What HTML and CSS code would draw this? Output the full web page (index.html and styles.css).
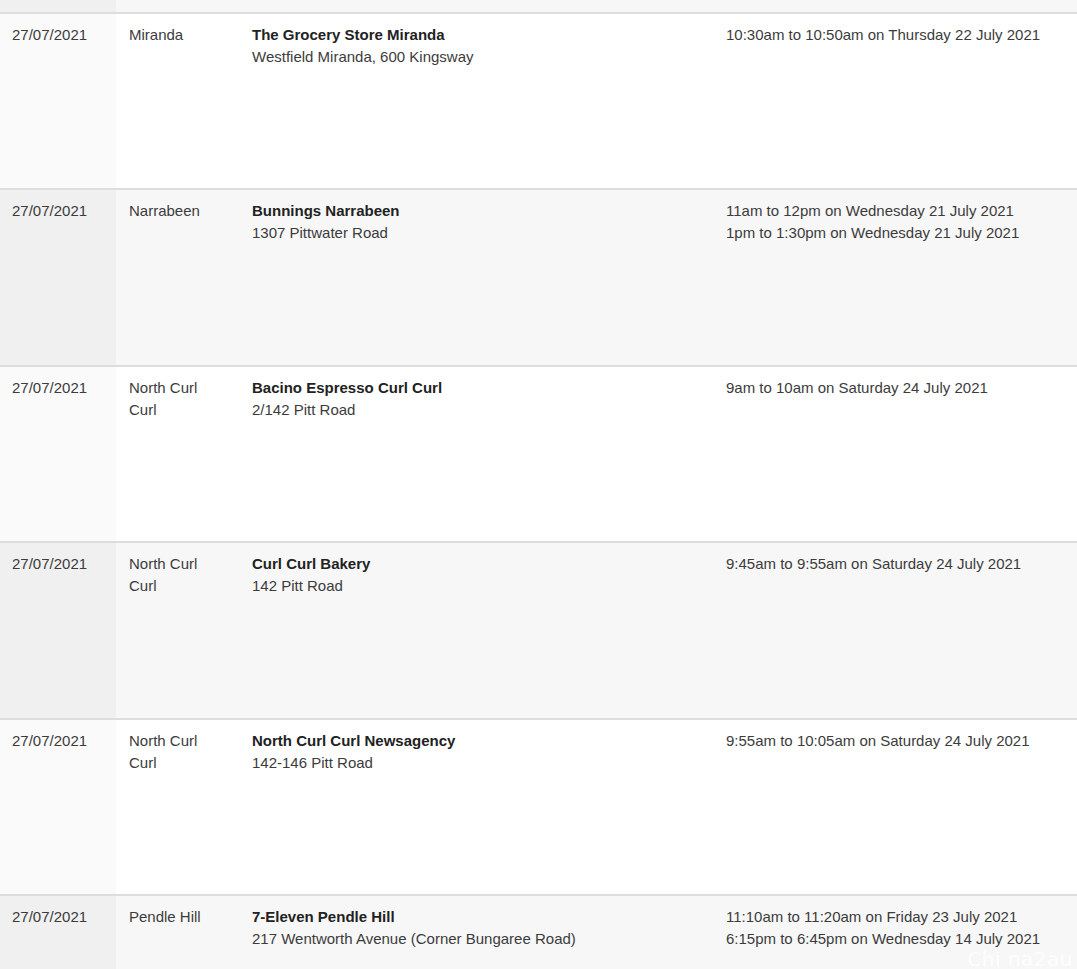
FILE: index.html
```html
<!DOCTYPE html>
<html lang="en">
<head>
<meta charset="utf-8">
<title>Case locations</title>
<link rel="stylesheet" href="styles.css">
</head>
<body>
<div class="table">
  <div class="row even stub">
    <div class="cell c1"></div><div class="cell c2"></div><div class="cell c3"></div><div class="cell c4"></div>
  </div>
  <div class="row odd">
    <div class="cell c1">27/07/2021</div>
    <div class="cell c2">Miranda</div>
    <div class="cell c3"><strong>The Grocery Store Miranda</strong><br>Westfield Miranda, 600 Kingsway</div>
    <div class="cell c4">10:30am to 10:50am on Thursday 22 July 2021</div>
  </div>
  <div class="row even">
    <div class="cell c1">27/07/2021</div>
    <div class="cell c2">Narrabeen</div>
    <div class="cell c3"><strong>Bunnings Narrabeen</strong><br>1307 Pittwater Road</div>
    <div class="cell c4">11am to 12pm on Wednesday 21 July 2021<br>1pm to 1:30pm on Wednesday 21 July 2021</div>
  </div>
  <div class="row odd">
    <div class="cell c1">27/07/2021</div>
    <div class="cell c2">North Curl Curl</div>
    <div class="cell c3"><strong>Bacino Espresso Curl Curl</strong><br>2/142 Pitt Road</div>
    <div class="cell c4">9am to 10am on Saturday 24 July 2021</div>
  </div>
  <div class="row even">
    <div class="cell c1">27/07/2021</div>
    <div class="cell c2">North Curl Curl</div>
    <div class="cell c3"><strong>Curl Curl Bakery</strong><br>142 Pitt Road</div>
    <div class="cell c4">9:45am to 9:55am on Saturday 24 July 2021</div>
  </div>
  <div class="row odd">
    <div class="cell c1">27/07/2021</div>
    <div class="cell c2">North Curl Curl</div>
    <div class="cell c3"><strong>North Curl Curl Newsagency</strong><br>142-146 Pitt Road</div>
    <div class="cell c4">9:55am to 10:05am on Saturday 24 July 2021</div>
  </div>
  <div class="row even">
    <div class="cell c1">27/07/2021</div>
    <div class="cell c2">Pendle Hill</div>
    <div class="cell c3"><strong>7-Eleven Pendle Hill</strong><br>217 Wentworth Avenue (Corner Bungaree Road)</div>
    <div class="cell c4">11:10am to 11:20am on Friday 23 July 2021<br>6:15pm to 6:45pm on Wednesday 14 July 2021</div>
  </div>
</div>
<div class="watermark">Chi na2au</div>
</body>
</html>
```
FILE: styles.css
```css
html, body {
  margin: 0;
  padding: 0;
  background: #fff;
  overflow: hidden;
}
body {
  font-family: "Liberation Sans", Arial, sans-serif;
  font-size: 15px;
  line-height: 22px;
  color: #3c3c3c;
  width: 1077px;
  height: 969px;
  position: relative;
}
.table {
  display: flex;
  flex-direction: column;
}
.row {
  display: grid;
  grid-template-columns: 116px 124px 474px 1fr;
  height: 174.4px;
  border-top: 2px solid #dddddd;
}
.row.stub {
  height: 12px;
  border-top: none;
}
.cell {
  padding: 10px 12px 0 12px;
}
.c2 { padding-left: 13px; }
.row.odd .cell { background: #ffffff; }
.row.odd .c1 { background: #fafafa; }
.row.even .cell { background: #f7f7f7; }
.row.even .c1 { background: #f0f0f0; }
.c3 strong {
  font-weight: bold;
  color: #222;
}
.watermark {
  position: absolute;
  right: 4px;
  bottom: 0;
  font-family: "DejaVu Sans", sans-serif;
  font-size: 20px;
  line-height: 20px;
  color: rgba(255, 255, 255, 0.85);
  letter-spacing: 0.5px;
}
```
